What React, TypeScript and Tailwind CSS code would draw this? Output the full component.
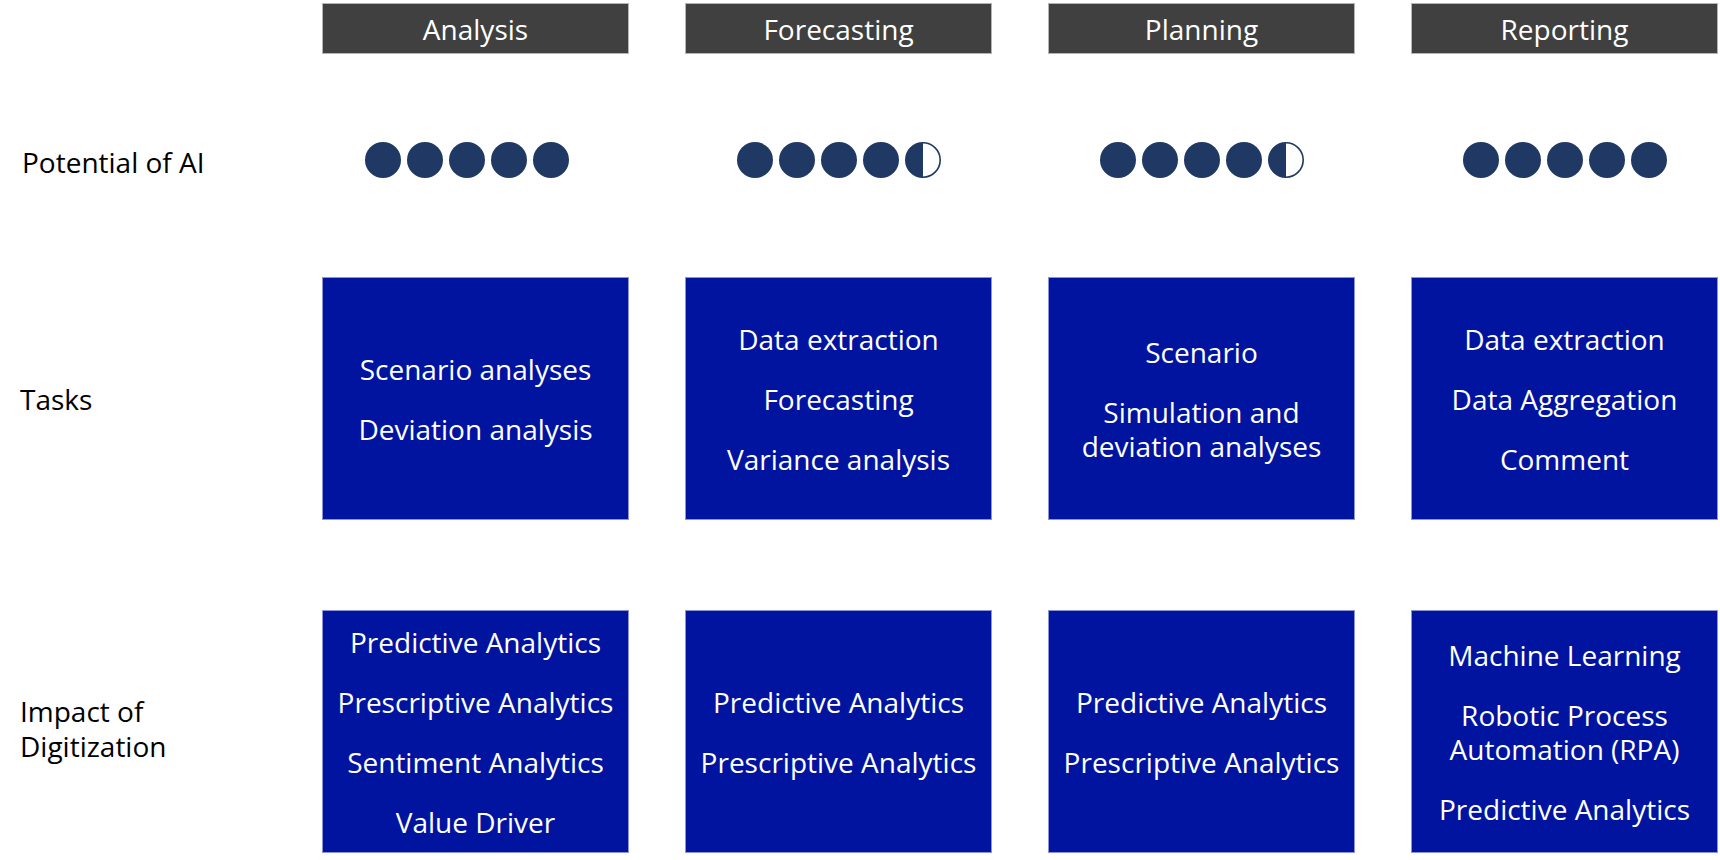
import React from "react"

type Column = {
  title: string
  score: number
  dotsShift?: string
  tasks: string[][]
  impact: string[][]
}

const columns: Column[] = [
  {
    title: "Analysis",
    score: 5,
    dotsShift: "-translate-x-[9px]",
    tasks: [["Scenario analyses"], ["Deviation analysis"]],
    impact: [["Predictive Analytics"], ["Prescriptive Analytics"], ["Sentiment Analytics"], ["Value Driver"]],
  },
  {
    title: "Forecasting",
    score: 4.5,
    tasks: [["Data extraction"], ["Forecasting"], ["Variance analysis"]],
    impact: [["Predictive Analytics"], ["Prescriptive Analytics"]],
  },
  {
    title: "Planning",
    score: 4.5,
    tasks: [["Scenario"], ["Simulation and", "deviation analyses"]],
    impact: [["Predictive Analytics"], ["Prescriptive Analytics"]],
  },
  {
    title: "Reporting",
    score: 5,
    tasks: [["Data extraction"], ["Data Aggregation"], ["Comment"]],
    impact: [["Machine Learning"], ["Robotic Process", "Automation (RPA)"], ["Predictive Analytics"]],
  },
]

function Dot({ half }: { half?: boolean }) {
  if (!half) return <div className="h-9 w-9 rounded-full bg-[#1f3864]" />
  return (
    <svg width="36" height="36" viewBox="0 0 36 36">
      <circle cx="18" cy="18" r="17.2" fill="#fff" stroke="#1f3864" strokeWidth="1.6" />
      <path d="M18 0.8 A17.2 17.2 0 0 0 18 35.2 Z" fill="#1f3864" />
    </svg>
  )
}

function Dots({ score, shift }: { score: number; shift?: string }) {
  const full = Math.floor(score)
  return (
    <div className={`flex justify-center gap-[6px] ${shift ?? ""}`}>
      {Array.from({ length: 5 }).map((_, i) => (
        <Dot key={i} half={i >= full} />
      ))}
    </div>
  )
}

function BlueBox({ items }: { items: string[][] }) {
  return (
    <div className="flex h-full flex-col items-center justify-center gap-[26px] border border-[#8c93d8] bg-[#0014a0] text-center text-[28px] leading-[34px] text-white">
      {items.map((lines, i) => (
        <div key={i}>
          {lines.map((l) => (
            <div key={l}>{l}</div>
          ))}
        </div>
      ))}
    </div>
  )
}

const row = "grid grid-cols-[266px_repeat(4,307px)] gap-x-[56px]"

export default function App() {
  return (
    <div className="h-[860px] w-[1720px] overflow-hidden bg-white pt-[3px] font-['Open_Sans',sans-serif] text-[28px] text-black">
      <div className={`${row} h-[51px] grid-rows-[51px]`}>
        <div />
        {columns.map((c) => (
          <div key={c.title} className="flex items-center justify-center border border-[#b4b4b4] bg-[#404040] text-white">
            {c.title}
          </div>
        ))}
      </div>

      <div className={`${row} mt-[88px] h-[36px] grid-rows-[36px] items-center`}>
        <div className="pl-[22px] pt-[3px] leading-[36px]">Potential of AI</div>
        {columns.map((c) => (
          <Dots key={c.title} score={c.score} shift={c.dotsShift} />
        ))}
      </div>

      <div className={`${row} mt-[99px] h-[243px] grid-rows-[243px]`}>
        <div className="flex items-center pl-[20px]">Tasks</div>
        {columns.map((c) => (
          <BlueBox key={c.title} items={c.tasks} />
        ))}
      </div>

      <div className={`${row} mt-[90px] h-[243px] grid-rows-[243px]`}>
        <div className="flex items-center pb-[6px] pl-[20px] leading-[35px]">
          Impact of
          <br />
          Digitization
        </div>
        {columns.map((c) => (
          <BlueBox key={c.title} items={c.impact} />
        ))}
      </div>
    </div>
  )
}
